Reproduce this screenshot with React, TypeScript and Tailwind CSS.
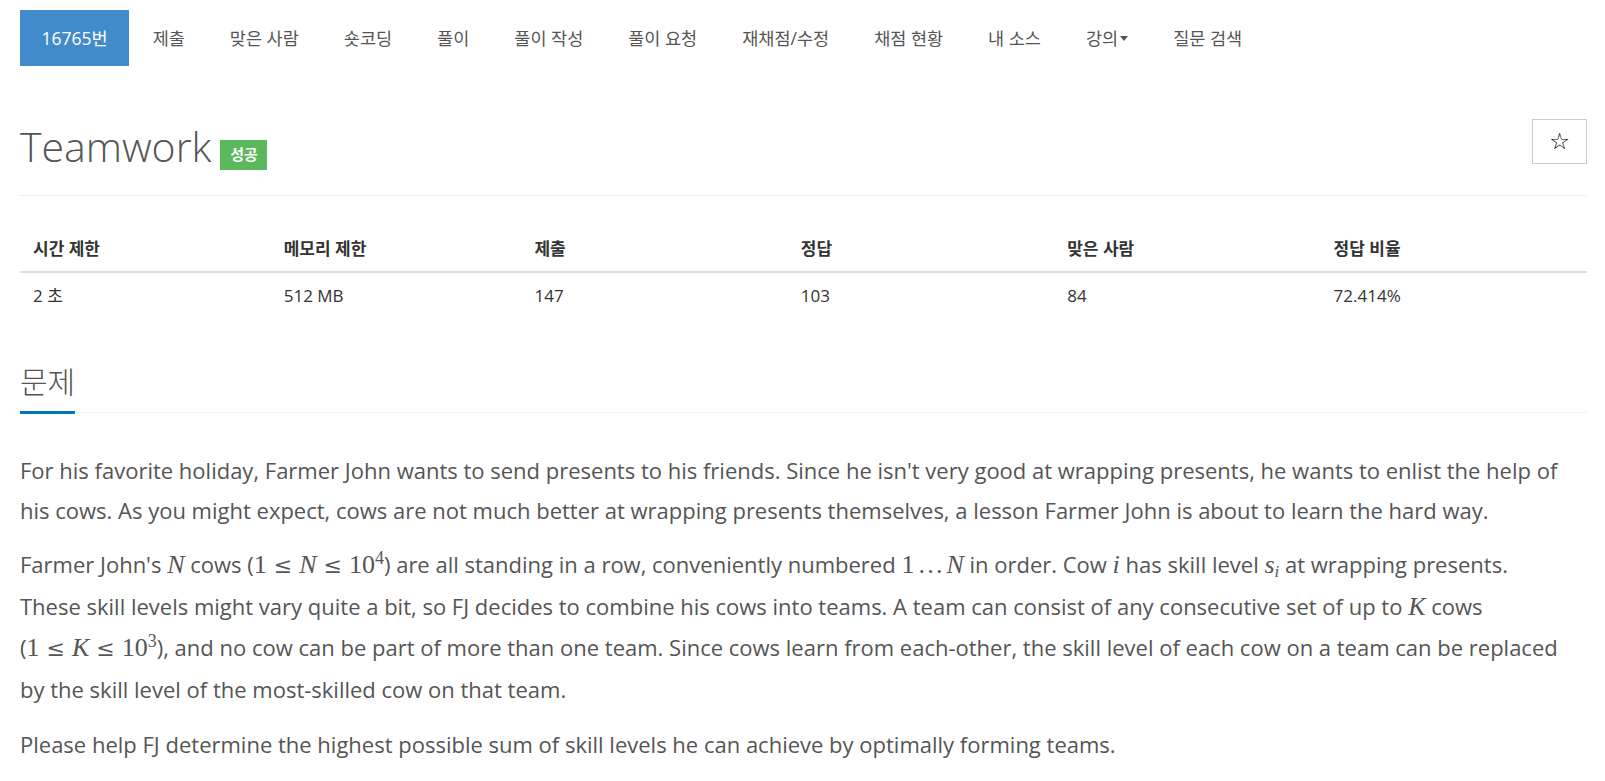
import React from 'react';

const navItems = ['제출', '맞은 사람', '숏코딩', '풀이', '풀이 작성', '풀이 요청', '재채점/수정', '채점 현황', '내 소스', '강의', '질문 검색'];

const stats = [
    { label: '시간 제한', value: '2 초', w: 'w-[16%]' },
    { label: '메모리 제한', value: '512 MB', w: 'w-[16%]' },
    { label: '제출', value: '147', w: 'w-[17%]' },
    { label: '정답', value: '103', w: 'w-[17%]' },
    { label: '맞은 사람', value: '84', w: 'w-[17%]' },
    { label: '정답 비율', value: '72.414%', w: 'w-[17%]' },
];

// inline math, roughly like KaTeX output
const M = ({ children }: { children: React.ReactNode }) => (
    <span className="font-['Liberation_Serif','DejaVu_Serif',serif] text-[26px] italic">{children}</span>
);
const R = ({ children }: { children: React.ReactNode }) => (
    <span className="font-['Liberation_Serif','DejaVu_Serif',serif] text-[26px] not-italic">{children}</span>
);
const Le = () => (
    <span className="font-['DejaVu_Serif',serif] text-[22px] mx-[7px]">≤</span>
);

const App = () => {
    return (
        <div className="min-h-screen bg-white font-['Open_Sans','Noto_Sans_CJK_KR',sans-serif] text-[#555] pl-[20px] pr-[18px]">
            {/* problem menu */}
            <ul className="flex mt-[10px] text-[17.5px]">
                <li className="h-[56px] flex items-center px-[21.5px] bg-[#428bca] text-white">16765번</li>
                {navItems.map((item) => (
                    <li key={item} className="h-[56px] flex items-center px-[21.5px] ml-[2px] text-[#555]">
                        {item}
                        {item === '강의' && (
                            <span className="ml-[2px] inline-block w-0 h-0 border-l-[4.5px] border-r-[4.5px] border-t-[5px] border-l-transparent border-r-transparent border-t-[#555]"></span>
                        )}
                    </li>
                ))}
            </ul>

            {/* title */}
            <div className="flex items-center justify-between mt-[53px] pb-[23px] border-b border-[#eee]">
                <div className="flex items-end">
                    <h1 className="text-[41px] leading-[44px] font-light text-[#555]">Teamwork</h1>
                    <span className="ml-[9px] -mb-[2px] h-[30px] w-[47px] flex items-center justify-center bg-[#5cb85c] text-white text-[15px] font-bold">성공</span>
                </div>
                <button className="mb-[8px] w-[55px] h-[45px] border border-[#ccc] bg-white flex items-center justify-center text-[23px] text-black font-['DejaVu_Sans',sans-serif]">☆</button>
            </div>

            {/* stats table */}
            <table className="w-full mt-[30px] text-[17px] text-[#333]">
                <thead>
                    <tr className="border-b-2 border-[#ddd]">
                        {stats.map((s) => (
                            <th key={s.label} className={`${s.w} text-left font-bold px-[13px] py-[9px] leading-[27px]`}>{s.label}</th>
                        ))}
                    </tr>
                </thead>
                <tbody>
                    <tr>
                        {stats.map((s) => (
                            <td key={s.label} className="px-[13px] py-[10px] leading-[26px]">{s.value}</td>
                        ))}
                    </tr>
                </tbody>
            </table>

            {/* problem description */}
            <div className="mt-[44px] border-b border-dotted border-[#e4e9f0]">
                <h2 className="inline-block text-[30px] leading-[38px] font-light text-[#555] pb-[10px] border-b-[3px] border-[#0076c0] -mb-[2px]">문제</h2>
            </div>

            <div className="mt-[37px] text-[22px] leading-[40px] text-[#555] whitespace-nowrap">
                <p className="mb-[14px]">
                    For his favorite holiday, Farmer John wants to send presents to his friends. Since he isn't very good at wrapping presents, he wants to enlist the help of
                    <br />
                    his cows. As you might expect, cows are not much better at wrapping presents themselves, a lesson Farmer John is about to learn the hard way.
                </p>
                <p className="mb-[14px] leading-[41px]">
                    Farmer John's <M>N</M> cows (<R>1</R><Le /><M>N</M><Le /><R>10<sup className="text-[18px]">4</sup></R>) are all standing in a row, conveniently numbered <R>1</R><R><span className="mx-[3px]">…</span></R><M>N</M> in order. Cow <M>i</M> has skill level <M>s<sub className="text-[17px]">i</sub></M> at wrapping presents.
                    <br />
                    These skill levels might vary quite a bit, so FJ decides to combine his cows into teams. A team can consist of any consecutive set of up to <M>K</M> cows
                    <br />
                    (<R>1</R><Le /><M>K</M><Le /><R>10<sup className="text-[18px]">3</sup></R>), and no cow can be part of more than one team. Since cows learn from each-other, the skill level of each cow on a team can be replaced
                    <br />
                    by the skill level of the most-skilled cow on that team.
                </p>
                <p className="mb-[14px]">
                    Please help FJ determine the highest possible sum of skill levels he can achieve by optimally forming teams.
                </p>
            </div>
        </div>
    );
};

export default App;
